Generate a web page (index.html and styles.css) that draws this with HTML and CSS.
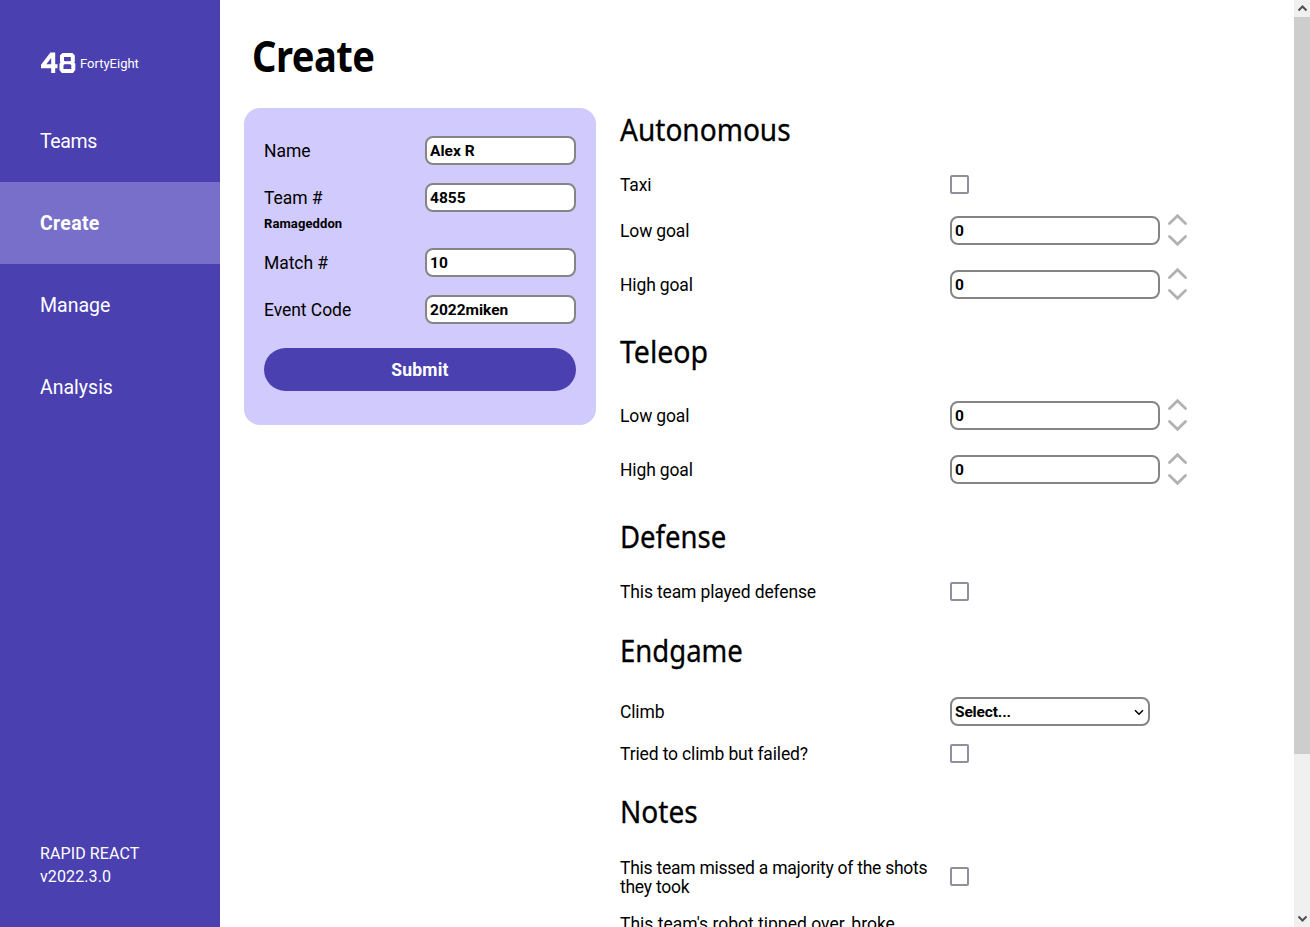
FILE: index.html
```html
<!DOCTYPE html>
<html lang="en">
<head>
<meta charset="utf-8">
<title>FortyEight - Create</title>
<link rel="stylesheet" href="styles.css">
</head>
<body>
<div class="app">
  <aside class="sidebar">
    <a class="brand"><svg class="logo" width="36" height="22" viewBox="0 0 36 22" fill="none" stroke="#fff" stroke-width="4"><path d="M17.5 14.2H3V13.4L11.4 2.5H13.2V21"/><path d="M23.3 3H31.7L32.8 4.2V9L31.5 10.6 33.3 12.3V17.3L32 19H22.8L21.5 17.3V12.3L23.2 10.6 22 9V4.2Z"/><path stroke-width="3" d="M23 10.7H32"/></svg><span class="brand-name">FortyEight</span></a>
    <nav class="nav">
      <a class="nav-item teams">Teams</a>
      <a class="nav-item active">Create</a>
      <a class="nav-item">Manage</a>
      <a class="nav-item">Analysis</a>
    </nav>
    <div class="version">RAPID REACT<br>v2022.3.0</div>
  </aside>
  <main class="main">
    <h1 class="title">Create</h1>
    <div class="columns">
      <form class="card">
        <div class="field"><label>Name</label><input class="box" value="Alex R"></div>
        <div class="field team"><label>Team #</label><input class="box" value="4855"></div>
        <div class="team-name">Ramageddon</div>
        <div class="field"><label>Match #</label><input class="box" value="10"></div>
        <div class="field"><label>Event Code</label><input class="box" value="2022miken"></div>
        <button class="submit" type="button">Submit</button>
      </form>
      <section class="sheet">
        <h2 class="head">Autonomous</h2>
        <div class="row check"><span class="label">Taxi</span><span class="tick"></span></div>
        <div class="row count"><span class="label">Low goal</span><input class="box" value="0"><svg class="step" viewBox="0 0 20 34"><path d="M1.5 10.5 9.5 2.8 17.5 10.5M1.5 23.5 9.5 31.2 17.5 23.5"/></svg></div>
        <div class="row count"><span class="label">High goal</span><input class="box" value="0"><svg class="step" viewBox="0 0 20 34"><path d="M1.5 10.5 9.5 2.8 17.5 10.5M1.5 23.5 9.5 31.2 17.5 23.5"/></svg></div>
        <h2 class="head tall teleop">Teleop</h2>
        <div class="row count"><span class="label">Low goal</span><input class="box" value="0"><svg class="step" viewBox="0 0 20 34"><path d="M1.5 10.5 9.5 2.8 17.5 10.5M1.5 23.5 9.5 31.2 17.5 23.5"/></svg></div>
        <div class="row count"><span class="label">High goal</span><input class="box" value="0"><svg class="step" viewBox="0 0 20 34"><path d="M1.5 10.5 9.5 2.8 17.5 10.5M1.5 23.5 9.5 31.2 17.5 23.5"/></svg></div>
        <h2 class="head narrow">Defense</h2>
        <div class="row check"><span class="label">This team played defense</span><span class="tick"></span></div>
        <h2 class="head tall narrow">Endgame</h2>
        <div class="row climb"><span class="label">Climb</span><div class="box select"><span>Select...</span><svg width="10" height="7" viewBox="0 0 10 7"><path d="M1 1.2 5 5.2 9 1.2"/></svg></div></div>
        <div class="row check"><span class="label">Tried to climb but failed?</span><span class="tick"></span></div>
        <h2 class="head notes">Notes</h2>
        <div class="row note missed"><span class="label">This team missed a majority of the shots<br>they took</span><span class="tick"></span></div>
        <div class="row note tipped"><span class="label">This team's robot tipped over, broke</span><span class="tick"></span></div>
      </section>
    </div>
  </main>
  <div class="scrollbar">
    <svg class="arrow" viewBox="0 0 16 17"><path d="M4.5 10.5 8.5 6.5 12.5 10.5"/></svg>
    <div class="thumb"></div>
    <svg class="arrow bottom" viewBox="0 0 16 17"><path d="M4.5 6.5 8.5 10.5 12.5 6.5"/></svg>
  </div>
</div>
</body>
</html>
```
FILE: styles.css
```css
* { box-sizing: border-box; }
body { margin: 0; background: #fff; color: #000; font: 17.5px/19px Roboto, sans-serif; overflow: hidden; }
.app { display: flex; height: 927px; overflow: hidden; }
.sidebar { display: flex; flex-direction: column; width: 220px; height: 927px; background: #4a40b0; color: #fff; }
.brand { display: flex; align-items: center; gap: 4px; height: 100px; padding: 26px 0 0 40px; }
.logo { display: block; }
.brand-name { font-size: 13px; }
.nav-item { display: flex; align-items: center; height: 82px; padding-left: 40px; font-size: 19.5px; }
.teams { letter-spacing: -.4px; }
.active { background: #776fc9; font-weight: 700; letter-spacing: .3px; }
.version { margin-top: auto; padding: 0 0 39px 40px; font-size: 16px; line-height: 23px; letter-spacing: .1px; }
.main { flex: 1; min-width: 0; padding-left: 24px; }
.title { height: 90px; margin: 0; padding: 30px 0 0 9px; font: 700 43px/52px "Noto Sans", sans-serif; letter-spacing: -.6px; transform: scaleX(.887); transform-origin: 0 0; }
.columns { display: flex; align-items: flex-start; gap: 24px; }
.card { width: 352px; height: 317px; margin: 18px 0 0; padding: 28px 20px; border-radius: 16px; background: #d0cbfc; }
.field { display: flex; align-items: center; justify-content: space-between; height: 29px; margin-bottom: 18px; }
.field label { padding-top: 2px; letter-spacing: -.05px; }
.team { margin-bottom: 0; }
.team-name { height: 36px; padding-top: 2px; font-size: 13px; font-weight: 700; letter-spacing: .1px; }
.box { display: block; width: 151px; height: 29px; margin: 0; padding: 0 3px; border: 2px solid #858585; border-radius: 8px; background: #fff; color: #000; font: 700 15.5px/19px Roboto, sans-serif; }
.submit { display: block; width: 312px; height: 43px; margin: 24px 0 0; border: 0; border-radius: 22px; background: #4a40b0; color: #fff; font: 700 17.5px Roboto, sans-serif; letter-spacing: .2px; }
.sheet { width: 600px; }
.head { height: 75px; margin: 0; padding-top: 19px; font: 400 30px/41px "Noto Sans", sans-serif; -webkit-text-stroke: .3px #000; transform: scaleX(.935); transform-origin: 0 0; }
.tall { height: 77px; }
.teleop { transform: scaleX(.95); }
.narrow { transform: scaleX(.917); }
.notes { padding-top: 18px; }
.row { display: grid; grid-template-columns: 330px 210px 20px; }
.label { padding-top: 1px; letter-spacing: -.14px; white-space: nowrap; }
.check { height: 39px; padding-top: 10px; }
.count { height: 54px; padding-top: 12px; }
.climb { height: 46px; padding-top: 9px; }
.note { height: 57px; padding-top: 10px; }
.count .label, .climb .label { padding-top: 6px; }
.missed .label { letter-spacing: -.25px; }
.tipped .label { padding-top: 0; letter-spacing: 0; }
.count .box { width: 210px; }
.tick { width: 19px; height: 19px; border: 2px solid #8f8f9d; border-radius: 2px; background: #fff; }
.note .tick { margin-top: 9px; }
.tipped .tick { margin-top: 19px; }
.step { width: 20px; height: 34px; margin: -3px 0 0 8px; fill: none; stroke: #b2b2b2; stroke-width: 2.8; stroke-linecap: round; }
.select { display: flex; align-items: center; justify-content: space-between; width: 200px; padding: 1px 4px 0 3px; letter-spacing: -.15px; }
.select svg { fill: none; stroke: #000; stroke-width: 1.5; }
.scrollbar { display: flex; flex-direction: column; width: 16px; height: 927px; background: #f0f0f0; }
.arrow { width: 16px; height: 17px; fill: none; stroke: #505050; stroke-width: 2; }
.thumb { height: 737px; background: #cdcdcd; }
.bottom { margin-top: auto; }
```
